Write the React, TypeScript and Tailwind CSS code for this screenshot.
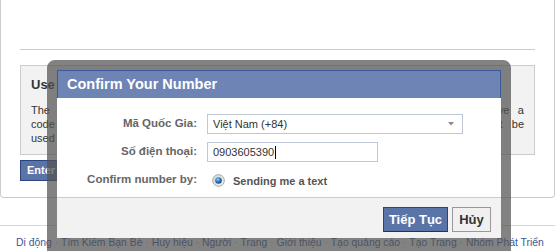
import React from "react";

const font = { fontFamily: '"Liberation Sans", Arial, sans-serif' };

function Radio() {
  return (
    <svg width="13" height="13" viewBox="0 0 13 13" className="shrink-0">
      <defs>
        <radialGradient id="rg" cx="0.4" cy="0.35" r="0.7">
          <stop offset="0" stopColor="#9ed3f5" />
          <stop offset="0.5" stopColor="#2a79c0" />
          <stop offset="1" stopColor="#0e3d6e" />
        </radialGradient>
        <linearGradient id="ring" x1="0" y1="0" x2="1" y2="1">
          <stop offset="0" stopColor="#d8d8d8" />
          <stop offset="1" stopColor="#f6f6f6" />
        </linearGradient>
      </defs>
      <circle cx="6.5" cy="6.5" r="5.8" fill="url(#ring)" stroke="#9a9a9a" strokeWidth="0.9" />
      <circle cx="6.5" cy="6.5" r="3.3" fill="url(#rg)" />
    </svg>
  );
}

const links = [
  "Di động",
  "Tìm Kiếm Bạn Bè",
  "Huy hiệu",
  "Người",
  "Trang",
  "Giới thiệu",
  "Tạo quảng cáo",
  "Tạo Trang",
  "Nhóm Phát Triển",
];

export default function App() {
  return (
    <div className="relative w-[555px] h-[251px] overflow-hidden bg-white" style={font}>
      {/* page panel */}
      <div className="h-[198px] border-x border-b border-[#cccccc] rounded-b-[4px] px-[19px]">
        <div className="h-[50px] border-b border-[#cccccc]" />
        <div className="mt-[15px] h-[90px] overflow-hidden border border-[#cccccc] bg-[#f2f2f2] px-[10px] pt-[11px] text-[#333333]">
          <div className="text-[13px] font-bold leading-[16px] whitespace-nowrap">Use your phone</div>
          <div className="mt-[10px] text-[11px] leading-[14px]">
            <div className="text-justify [text-align-last:justify]">
              The phone number you enter will be used to confirm your account. You will receive a
            </div>
            <div className="text-justify [text-align-last:justify]">
              code via SMS which you need to enter on the next page. Your number will not be
            </div>
            <div>used for anything else.</div>
          </div>
        </div>
        <div className="mt-[5px] h-[21px] w-[150px] bg-[#5b74a8] border border-[#29447e] text-white text-[11px] font-bold leading-[19px] pl-[6px] whitespace-nowrap overflow-hidden">
          Enter Code
        </div>
      </div>

      {/* footer */}
      <div className="mt-[27px] border-t border-[#d6d6d6] pt-[10px] pl-[16px] text-[10.4px] leading-[14px] whitespace-nowrap text-[#3b5998]">
        {links.map((l, i) => (
          <span key={l}>
            {i > 0 && <span className="text-[#aaaaaa]">&nbsp;·&nbsp;</span>}
            {l}
          </span>
        ))}
      </div>

      {/* dialog overlay */}
      <div className="absolute left-[47px] top-[60px] w-[464px] border-[10px] border-b-[20px] border-[rgba(82,82,82,0.72)] rounded-[8px] bg-clip-padding">
        <div className="h-[28px] bg-[#6d84b4] border border-b-0 border-[#3b5998] px-[9px] flex items-center text-white font-bold text-[14.5px]">
          Confirm Your Number
        </div>
        <div className="bg-white pt-[16px] pb-[7px] flex flex-col gap-[8px]">
          <div className="flex items-center h-[20px]">
            <div className="w-[140px] text-right text-[11.5px] font-bold text-[#666666]">Mã Quốc Gia:</div>
            <div className="ml-[10px] w-[256px] h-[20px] border border-[#bdc7d8] flex items-center pl-[5px] pr-[8px] text-[11px] text-[#333333]">
              <span className="flex-1">Việt Nam (+84)</span>
              <svg width="6" height="4" viewBox="0 0 6 4">
                <path d="M0 0 H6 L3 3.5 Z" fill="#8a8a8a" />
              </svg>
            </div>
          </div>
          <div className="flex items-center h-[20px]">
            <div className="w-[140px] text-right text-[11.5px] font-bold text-[#666666]">Số điện thoại:</div>
            <div className="ml-[10px] w-[171px] h-[20px] border border-[#bdc7d8] flex items-center pl-[5px] text-[11px] text-[#333333]">
              <span>0903605390</span>
              <span className="ml-[1px] w-[1px] h-[13px] bg-black" />
            </div>
          </div>
          <div className="flex items-center h-[20px]">
            <div className="w-[140px] text-right text-[11.5px] font-bold text-[#666666]">Confirm number by:</div>
            <div className="ml-[15px] flex items-center">
              <Radio />
              <span className="ml-[8px] text-[11px] font-bold text-[#555555] mt-[2px]">Sending me a text</span>
            </div>
          </div>
        </div>
        <div className="h-[41px] border-t border-[#cccccc] bg-[#f2f2f2] flex justify-end items-start pt-[9px] pr-[10px] gap-[4px]">
          <div className="w-[65px] h-[25px] bg-[#5b74a8] border border-[#29447e] border-b-[#1a356e] text-white font-bold text-[13px] flex items-center justify-center">
            Tiếp Tục
          </div>
          <div className="w-[39px] h-[25px] bg-[#f0f0f0] border border-[#999999] text-[#333333] font-bold text-[13px] flex items-center justify-center">
            Hủy
          </div>
        </div>
      </div>
    </div>
  );
}
